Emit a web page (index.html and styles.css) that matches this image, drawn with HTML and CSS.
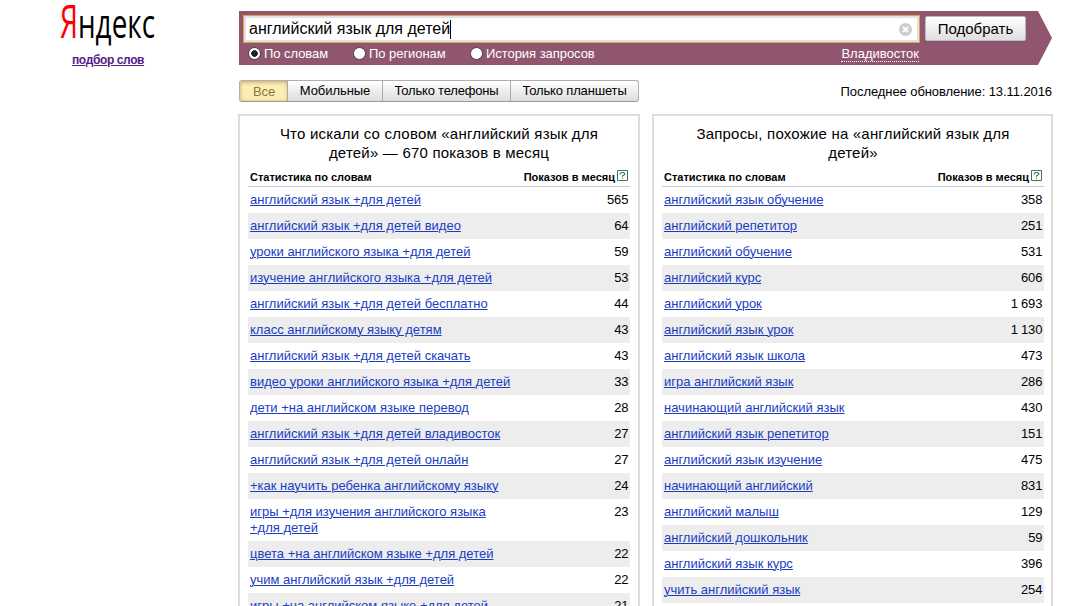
FILE: index.html
```html
<!DOCTYPE html>
<html lang="ru">
<head>
<meta charset="utf-8">
<title>Яндекс — подбор слов</title>
<link rel="stylesheet" href="styles.css">
</head>
<body>
<div class="page">
  <aside class="brand">
    <svg class="logo" width="110" height="53" viewBox="0 0 110 53" role="img" aria-label="Яндекс">
      <text x="3" y="38"><tspan class="logo-ya" textLength="18" lengthAdjust="spacingAndGlyphs">Я</tspan><tspan class="logo-rest" textLength="77" lengthAdjust="spacingAndGlyphs">ндекс</tspan></text>
    </svg>
    <a class="service" href="#">подбор слов</a>
  </aside>
  <main class="main">
    <form class="search">
      <div class="search-row">
        <div class="field"><span class="query">английский язык для детей</span><span class="caret"></span>
          <svg class="clear" width="13" height="13" viewBox="0 0 13 13"><circle cx="6.5" cy="6.5" r="6.5" fill="#ccc"/><path d="M4 4l5 5M9 4l-5 5" stroke="#fff" stroke-width="2"/></svg>
        </div>
        <button class="submit" type="button">Подобрать</button>
      </div>
      <div class="modes">
        <span class="mode mode-words"><i class="radio radio-on"></i><span>По словам</span></span>
        <span class="mode mode-regions"><i class="radio"></i><span>По регионам</span></span>
        <span class="mode mode-history"><i class="radio"></i><span>История запросов</span></span>
        <span class="region">Владивосток</span>
      </div>
    </form>
    <div class="toolbar">
      <div class="tabs">
        <span class="tab tab-on">Все</span>
        <span class="tab tab-mobile">Мобильные</span>
        <span class="tab tab-phones">Только телефоны</span>
        <span class="tab tab-tablets">Только планшеты</span>
      </div>
      <span class="updated">Последнее обновление: 13.11.2016</span>
    </div>
    <div class="columns">
      <section class="panel">
        <h2>Что искали со словом «английский язык для<br>детей» — 670 показов в месяц</h2>
        <div class="head"><span>Статистика по словам</span><span class="shows">Показов в месяц<svg class="help" width="11" height="11" viewBox="0 0 11 11"><path class="help-box" d="M.5 .5h10v10h-10z"/><path class="help-mark" d="M3 4.5v-1h1v-1h3v1h1v1h-1v1h-1.500v1.500M5 8.500h1"/></svg></span></div>
        <div class="row"><a href="#">английский язык +для детей</a><span class="count">565</span></div>
        <div class="row"><a href="#">английский язык +для детей видео</a><span class="count">64</span></div>
        <div class="row"><a href="#">уроки английского языка +для детей</a><span class="count">59</span></div>
        <div class="row"><a href="#">изучение английского языка +для детей</a><span class="count">53</span></div>
        <div class="row"><a href="#">английский язык +для детей бесплатно</a><span class="count">44</span></div>
        <div class="row"><a href="#">класс английскому языку детям</a><span class="count">43</span></div>
        <div class="row"><a href="#">английский язык +для детей скачать</a><span class="count">43</span></div>
        <div class="row"><a href="#">видео уроки английского языка +для детей</a><span class="count">33</span></div>
        <div class="row"><a href="#">дети +на английском языке перевод</a><span class="count">28</span></div>
        <div class="row"><a href="#">английский язык +для детей владивосток</a><span class="count">27</span></div>
        <div class="row"><a href="#">английский язык +для детей онлайн</a><span class="count">27</span></div>
        <div class="row"><a href="#">+как научить ребенка английскому языку</a><span class="count">24</span></div>
        <div class="row"><a href="#">игры +для изучения английского языка<br>+для детей</a><span class="count">23</span></div>
        <div class="row"><a href="#">цвета +на английском языке +для детей</a><span class="count">22</span></div>
        <div class="row"><a href="#">учим английский язык +для детей</a><span class="count">22</span></div>
        <div class="row"><a href="#">игры +на английском языке +для детей</a><span class="count">21</span></div>
      </section>
      <section class="panel panel-similar">
        <h2>Запросы, похожие на «английский язык для<br>детей»</h2>
        <div class="head"><span>Статистика по словам</span><span class="shows">Показов в месяц<svg class="help" width="11" height="11" viewBox="0 0 11 11"><path class="help-box" d="M.5 .5h10v10h-10z"/><path class="help-mark" d="M3 4.5v-1h1v-1h3v1h1v1h-1v1h-1.500v1.500M5 8.500h1"/></svg></span></div>
        <div class="row"><a href="#">английский язык обучение</a><span class="count">358</span></div>
        <div class="row"><a href="#">английский репетитор</a><span class="count">251</span></div>
        <div class="row"><a href="#">английский обучение</a><span class="count">531</span></div>
        <div class="row"><a href="#">английский курс</a><span class="count">606</span></div>
        <div class="row"><a href="#">английский урок</a><span class="count">1 693</span></div>
        <div class="row"><a href="#">английский язык урок</a><span class="count">1 130</span></div>
        <div class="row"><a href="#">английский язык школа</a><span class="count">473</span></div>
        <div class="row"><a href="#">игра английский язык</a><span class="count">286</span></div>
        <div class="row"><a href="#">начинающий английский язык</a><span class="count">430</span></div>
        <div class="row"><a href="#">английский язык репетитор</a><span class="count">151</span></div>
        <div class="row"><a href="#">английский язык изучение</a><span class="count">475</span></div>
        <div class="row"><a href="#">начинающий английский</a><span class="count">831</span></div>
        <div class="row"><a href="#">английский малыш</a><span class="count">129</span></div>
        <div class="row"><a href="#">английский дошкольник</a><span class="count">59</span></div>
        <div class="row"><a href="#">английский язык курс</a><span class="count">396</span></div>
        <div class="row"><a href="#">учить английский язык</a><span class="count">254</span></div>
      </section>
    </div>
  </main>
</div>
</body>
</html>
```

FILE: styles.css
```css
* { box-sizing: border-box; }
html, body { height: 606px; overflow: hidden; }
body { margin: 0; background: #fff; color: #000; font: 13px/16px "Liberation Sans", Arial, sans-serif; }
.page { display: flex; }
.brand { flex: none; width: 239px; padding-left: 57px; }
.logo { display: block; overflow: visible; }
.logo text { font-family: "Open Sans", sans-serif; }
.logo-ya { font-size: 45px; fill: #f00; }
.logo-rest { font-size: 40px; fill: #000; }
.service { display: block; margin: -1px 0 0 15px; font-size: 12px; font-weight: bold; color: #551a8b; letter-spacing: -0.38px; }
.main { flex: none; width: 814px; padding-top: 11px; }
.search { height: 54px; width: 813px; padding: 4px 0 0 4px; background: #91566f; clip-path: polygon(0 0, 799px 0, 813px 27px, 799px 54px, 0 54px); }
.search-row { display: flex; align-items: flex-start; gap: 6px; height: 28px; }
.field { display: flex; align-items: center; width: 677px; height: 28px; margin-right: -1px; padding: 0 7px 0 5px; background: #fff; border: 1px solid #d9a441; box-shadow: inset 0 0 0 2px #e2e2e2; font-size: 16px; }
.caret { width: 1px; height: 19px; background: #000; }
.clear { margin-left: auto; }
.submit { width: 101px; height: 25px; margin-top: 1px; padding: 0; border: 1px solid #bbb; border-radius: 2px; background: linear-gradient(#fff, #dedede); font: 15px "Liberation Sans", Arial, sans-serif; }
.modes { display: flex; height: 20px; align-items: center; padding: 1px 0 0 5px; color: #fff; }
.mode { display: flex; align-items: center; gap: 3px; letter-spacing: -0.05px; }
.mode-words { width: 105px; }
.mode-regions { width: 117px; }
.radio { width: 13px; height: 13px; border-radius: 50%; background: #fff; border: 1px solid #444; }
.radio-on { background: radial-gradient(circle, #222 0 3px, #fff 3.6px); }
.region { margin-left: auto; margin-right: 133px; line-height: 15px; border-bottom: 1px dotted #fff; }
.toolbar { display: flex; justify-content: space-between; height: 49px; padding-top: 15px; }
.tabs { display: flex; width: 400px; height: 22px; border: 1px solid #b0b0b0; border-bottom-color: #999; border-radius: 3px; background: linear-gradient(#fff, #ddd); overflow: hidden; }
.tab { flex: none; line-height: 20px; text-align: center; border-left: 1px solid #aaa; letter-spacing: -0.06px; }
.tab-on { width: 48px; margin-right: -1px; border-left: 0; color: #84754c; line-height: 21px; background: #ffeeb2; box-shadow: inset 0 1px 4px #b8a268; }
.tab-mobile { width: 95px; }
.tab-phones { width: 128px; letter-spacing: -0.2px; }
.tab-tablets { width: 128px; letter-spacing: -0.15px; }
.updated { line-height: 23px; margin-right: 1px; letter-spacing: -0.08px; }
.columns { display: flex; gap: 12px; margin-left: -1px; }
.panel { flex: none; width: 402px; height: 520px; padding: 8px 8px 0; border: 2px solid #ddd; }
.panel-similar { width: 401px; padding-right: 7px; }
h2 { margin: 0; height: 43px; font-size: 15px; font-weight: normal; line-height: 19px; text-align: center; letter-spacing: 0.2px; }
.head { display: flex; justify-content: space-between; height: 20px; padding: 2px 2px 0; border-bottom: 1px solid #c8c8d0; font-size: 11px; font-weight: bold; line-height: 16px; }
.shows { display: flex; gap: 2px; }
.help { margin-top: 1px; }
.help path { fill: none; stroke: #3a7a50; }
.row { display: flex; justify-content: space-between; padding: 5px 2px; }
.row:nth-child(even) { background: #ededed; }
.row a { color: #1a3dc1; text-underline-offset: 1px; text-decoration-thickness: 1px; }
.count { letter-spacing: -0.2px; margin-right: -0.2px; }
```
